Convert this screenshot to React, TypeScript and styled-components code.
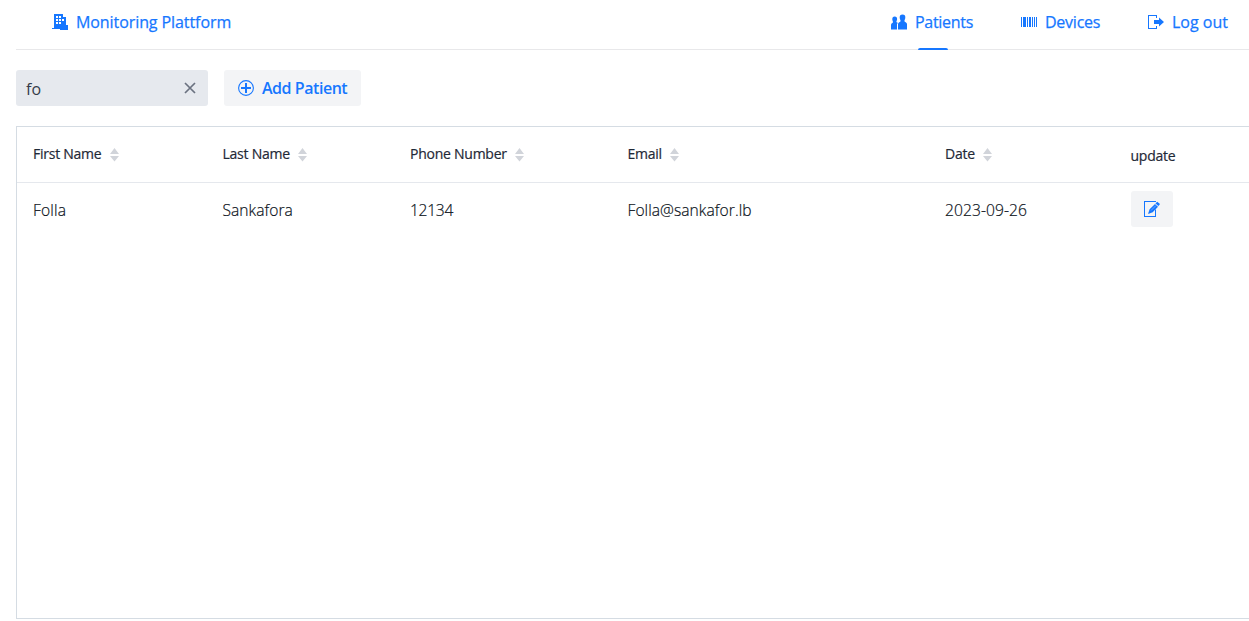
import React from 'react';
import styled, { createGlobalStyle } from 'styled-components';

const Global = createGlobalStyle`
  * { box-sizing: border-box; }
  html, body { margin: 0; background: #fff; overflow: hidden; }
  body { font-family: "Open Sans", "Noto Sans", sans-serif; color: #1f2937; }
  button { font: inherit; border: 0; margin: 0; }
  svg { display: block; flex: none; }
`;
const Page = styled.div`width: 1249px; height: 621px; padding-left: 16px; overflow: hidden;`;
const Header = styled.header`
  height: 50px; border-bottom: 1px solid #e8e8ea; display: flex; justify-content: space-between;
  padding: 0 20px 0 36px;
`;
const Nav = styled.nav`display: flex; gap: 47px;`;
const NavItem = styled.a<{ $active?: boolean }>`
  height: 50px; display: flex; flex-direction: column; align-items: center; justify-content: space-between;
  color: #1677ff; text-decoration: none; font-size: 16px; font-weight: 500;
  -webkit-text-stroke: .25px currentColor;
  &::after { content: ""; width: 30px; height: 2px; border-radius: 2px 2px 0 0; background: ${p => (p.$active ? '#1677ff' : 'transparent')}; }
`;
const NavLabel = styled.span`height: 44px; display: flex; align-items: center; gap: 8px;`;
const Fit = styled.span<{ $w: number; $ls?: number }>`
  display: inline-block; width: ${p => p.$w}px; white-space: nowrap; letter-spacing: ${p => p.$ls ?? 0}px;
`;
const Toolbar = styled.div`display: flex; gap: 16px; padding: 20px 0;`;
const Search = styled.div`
  width: 192px; height: 36px; background: #e6e9ee; border-radius: 3px; display: flex; align-items: center;
  justify-content: space-between; padding: 2px 12px 0 10px; font-size: 16px; color: #343c4a;
  svg { margin-top: -3px; }
`;
const SoftButton = styled.button`
  height: 36px; background: #f3f4f6; border-radius: 3px; color: #1677ff; display: flex; align-items: center;
  gap: 8px; padding: 0 14px; font-size: 16px; font-weight: 600;
`;
const EditButton = styled(SoftButton)`width: 42px; padding: 0 13px;`;
const Table = styled.div`height: 493px; border: 1px solid #d5dce3; border-right: 0;`;
const Row = styled.div<{ $head?: boolean }>`
  display: grid; grid-template-columns: 189.5px 187.5px 217.5px 317.5px 185.5px 1fr; align-items: center;
  padding-left: 16px; height: ${p => (p.$head ? 56 : 52)}px;
  border-bottom: ${p => (p.$head ? '1px solid #e5e8ed' : '0')};
  font-size: ${p => (p.$head ? 14 : 15.6)}px; font-weight: ${p => (p.$head ? 500 : 300)};
  color: ${p => (p.$head ? '#1f2937' : '#0b1220')};
  -webkit-text-stroke: .2px currentColor;
`;
const HeadCell = styled.div`
  display: flex; align-items: center; gap: 8px;
  span { margin-top: -2px; }
`;
const UpdateHead = styled.div`letter-spacing: -.25px; padding-top: 2px;`;
const Cell = styled.span<{ $ls: number }>`letter-spacing: ${p => p.$ls}px; padding-top: 1px;`;

const Building = () => (
  <svg width="16" height="16" viewBox="0 0 16 16" fill="#1677ff" shapeRendering="crispEdges">
    <path fillRule="evenodd" d="M2 0h9v3h3v6h-4v2H8v4H0v-1h2zM4 2v2h2V2zM7 2v2h2V2zM4 5v2h2V5zM7 5v2h2V5zM10 5v2h2V5zM4 8v2h2V8zM7 8v2h2V8z" />
    <path d="M10 9h4v2h2v5H8v-5h2z" />
  </svg>
);
const People = () => (
  <svg width="16" height="16" viewBox="0 0 16 16" fill="#1677ff">
    <path d="M11.500.5c2 0 3 1.200 2.800 3.200-.1 1.600-.8 2.300-.9 3.200 0 1 2.600 1.200 2.600 3V15.500H7V10c0-1.800 2.600-2 2.600-3-.1-.9-.8-1.600-.9-3.200C8.500 1.700 9.500.5 11.500.5z" />
    <path d="M3.700 2.500c1.700 0 2.500 1 2.400 2.700-.1 1.300-.7 1.900-.7 2.600 0 .6.8.7 1.400 1.100L6 10v5.500H0V11c0-2 2-1.800 2-3-.1-.8-.6-1.300-.7-2.700-.1-1.700.7-2.800 2.400-2.800z" />
  </svg>
);
const Barcode = () => (
  <svg width="16" height="16" viewBox="0 0 16 16" fill="#1677ff" shapeRendering="crispEdges">
    <path d="M0 3h1v10H0zM2 3h3v10H2zM6 3h1v10H6zM8 3h2v10H8zM11 3h1v10h-1zM13 3h1v10h-1zM15 3h1v10h-1z" />
  </svg>
);
const Logout = () => (
  <svg width="16" height="16" viewBox="0 0 16 16" fill="#1677ff">
    <path d="M9 4V1H0v14h9v-3H8v2H1V2h7v2z" /><path d="M6 6h5V3.500L16 8l-5 4.500V10H6z" />
  </svg>
);
const Plus = () => (
  <svg width="16" height="16" viewBox="0 0 16 16" fill="none" stroke="#1677ff">
    <circle cx="8" cy="8" r="7.400" strokeWidth="1.100" /><path d="M8 3v10M3 8h10" strokeWidth="2" />
  </svg>
);
const Close = () => (
  <svg width="12" height="12" viewBox="0 0 12 12" fill="none" stroke="#6b7280" strokeWidth="1.700"><path d="M1 1l10 10M11 1L1 11" /></svg>
);
const Sort = () => (
  <svg width="9" height="14" viewBox="0 0 9 14" fill="#d1d4da"><path d="M4.500 0L9 6H0zM0 8h9l-4.500 5.500z" /></svg>
);
const Edit = () => (
  <svg width="16" height="16" viewBox="0 0 16 16" fill="#1677ff">
    <path d="M0 0h12v1H1v14h10V9l1-1v8H0z" />
    <path d="M13.200.8L16 3l-1.500 2-3-2.500zM11 3l3 2.700-5.300 5.600L4 13l1.600-4.700z" />
    <path d="M7 9.500l5-5M11.200 2.700l3 2.600" stroke="#9cc5ff" strokeWidth=".6" />
  </svg>
);

const columns = [
  { name: 'First Name', w: 69 }, { name: 'Last Name', w: 67 }, { name: 'Phone Number', w: 97 },
  { name: 'Email', w: 34 }, { name: 'Date', w: 30 },
];
const patient = [
  { value: 'Folla', ls: 0.15 }, { value: 'Sankafora', ls: 0.05 }, { value: '12134', ls: -0.3 },
  { value: 'Folla@sankafor.lb', ls: 0.06 }, { value: '2023-09-26', ls: 0.08 },
];

export default function App() {
  return (
    <Page>
      <Global />
      <Header>
        <NavItem><NavLabel><Building /><Fit $w={155} $ls={-0.08}>Monitoring Plattform</Fit></NavLabel></NavItem>
        <Nav>
          <NavItem $active><NavLabel><People /><Fit $w={59} $ls={-0.3}>Patients</Fit></NavLabel></NavItem>
          <NavItem><NavLabel><Barcode /><Fit $w={56} $ls={-0.25}>Devices</Fit></NavLabel></NavItem>
          <NavItem><NavLabel><Logout /><Fit $w={57}>Log out</Fit></NavLabel></NavItem>
        </Nav>
      </Header>
      <Toolbar>
        <Search><span>fo</span><Close /></Search>
        <SoftButton><Plus /><Fit $w={85} $ls={-0.46}>Add Patient</Fit></SoftButton>
      </Toolbar>
      <Table>
        <Row $head>
          {columns.map(c => <HeadCell key={c.name}><Fit $w={c.w} $ls={-0.25}>{c.name}</Fit><Sort /></HeadCell>)}
          <UpdateHead>update</UpdateHead>
        </Row>
        <Row>
          {patient.map(c => <Cell key={c.value} $ls={c.ls}>{c.value}</Cell>)}
          <EditButton aria-label="update"><Edit /></EditButton>
        </Row>
      </Table>
    </Page>
  );
}
